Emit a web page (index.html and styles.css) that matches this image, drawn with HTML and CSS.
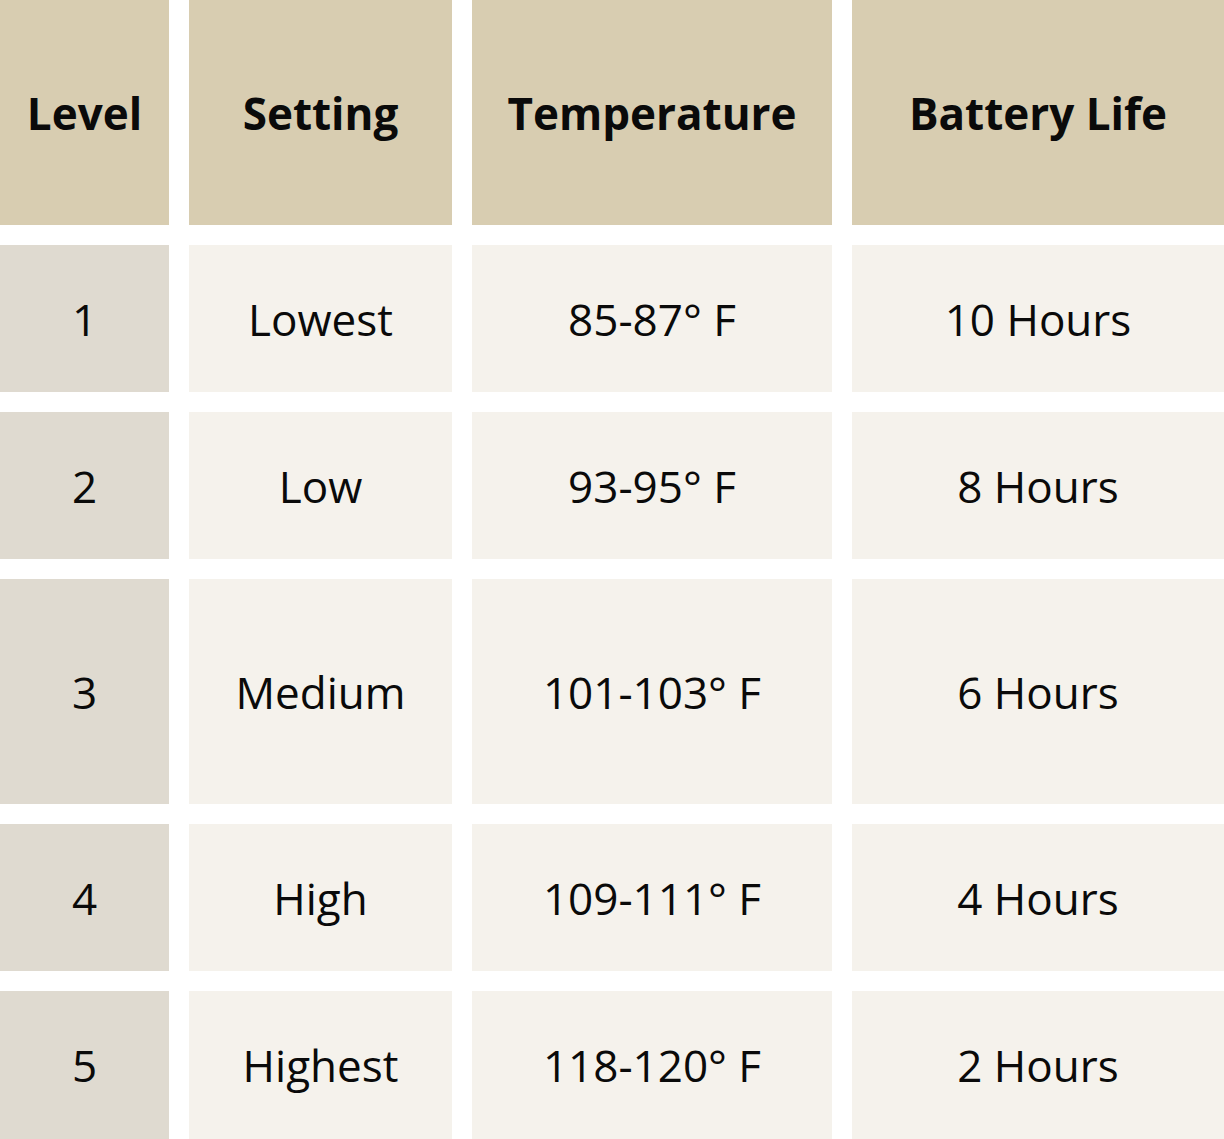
FILE: index.html
```html
<!DOCTYPE html>
<html>
<head>
<meta charset="utf-8">
<link rel="stylesheet" href="styles.css">
</head>
<body>
<div class="table">
  <div class="cell head">Level</div>
  <div class="cell head">Setting</div>
  <div class="cell head">Temperature</div>
  <div class="cell head">Battery Life</div>

  <div class="cell lvl">1</div>
  <div class="cell">Lowest</div>
  <div class="cell">85-87° F</div>
  <div class="cell">10 Hours</div>

  <div class="cell lvl">2</div>
  <div class="cell">Low</div>
  <div class="cell">93-95° F</div>
  <div class="cell">8 Hours</div>

  <div class="cell lvl">3</div>
  <div class="cell">Medium</div>
  <div class="cell">101-103° F</div>
  <div class="cell">6 Hours</div>

  <div class="cell lvl">4</div>
  <div class="cell">High</div>
  <div class="cell">109-111° F</div>
  <div class="cell">4 Hours</div>

  <div class="cell lvl">5</div>
  <div class="cell">Highest</div>
  <div class="cell">118-120° F</div>
  <div class="cell">2 Hours</div>
</div>
</body>
</html>
```
FILE: styles.css
```css
html, body {
  margin: 0;
  padding: 0;
  background: #ffffff;
}
body {
  font-family: "Open Sans", "Liberation Sans", sans-serif;
  color: #0a0a0a;
  overflow: hidden;
}
.table {
  display: grid;
  grid-template-columns: 169px 263px 360px 372px;
  grid-template-rows: 225px 147px 147px 225px 147px 148px;
  gap: 20px;
  width: 1224px;
}
.cell {
  display: flex;
  align-items: center;
  justify-content: center;
  background: #f5f2ec;
  font-size: 44px;
  line-height: 1;
  text-align: center;
}
.cell.head {
  background: #d8cdb1;
  font-weight: 700;
  font-size: 44px;
}
.cell.lvl {
  background: #dfdad0;
}
```
